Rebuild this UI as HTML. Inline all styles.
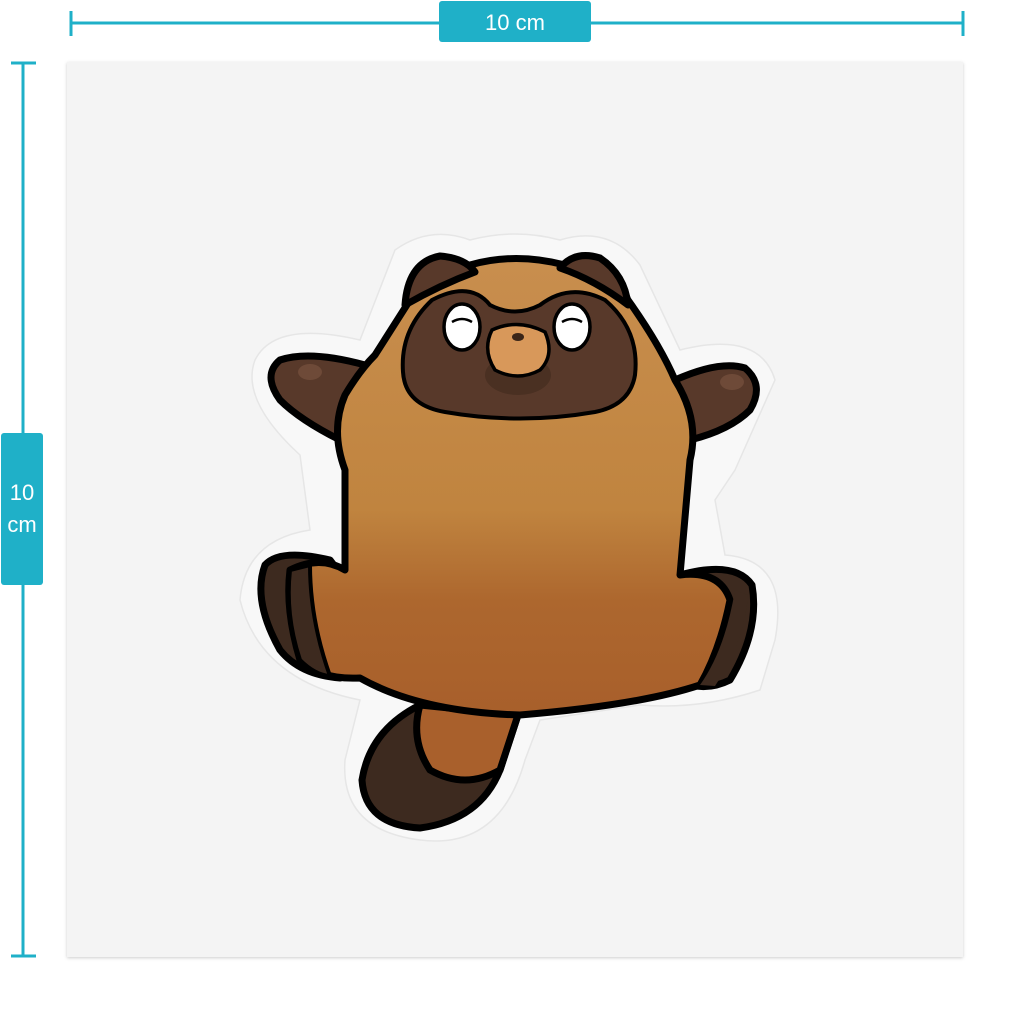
<!DOCTYPE html>
<html><head><style>
body{margin:0;width:1024px;height:1024px;background:#fff;overflow:hidden;font-family:"Liberation Sans",sans-serif}
</style></head><body>
<svg width="1024" height="1024" viewBox="0 0 1024 1024" xmlns="http://www.w3.org/2000/svg">
<defs>
<linearGradient id="bg" x1="0" y1="0" x2="0" y2="1">
<stop offset="0" stop-color="#c88e4e"/><stop offset="0.55" stop-color="#c0843f"/><stop offset="0.75" stop-color="#ad672e"/><stop offset="1" stop-color="#a85f2b"/>
</linearGradient>
<filter id="sh"><feDropShadow dx="0" dy="1" stdDeviation="1.5" flood-color="#000" flood-opacity="0.2"/></filter>
</defs>
<g stroke="#1fb0c8" stroke-width="3" fill="none">
<line x1="71" y1="23" x2="963" y2="23"/><line x1="71" y1="11" x2="71" y2="36"/><line x1="963" y1="11" x2="963" y2="36"/>
<line x1="23" y1="63" x2="23" y2="956"/><line x1="11" y1="63" x2="36" y2="63"/><line x1="11" y1="956" x2="36" y2="956"/>
</g>
<rect x="439" y="1" width="152" height="41" rx="3" fill="#1fb0c8"/>
<text x="515" y="30" font-size="22" fill="#fff" text-anchor="middle" font-family="Liberation Sans">10 cm</text>
<rect x="1" y="433" width="42" height="152" rx="3" fill="#1fb0c8"/>
<text x="22" y="500" font-size="22" fill="#fff" text-anchor="middle">10</text>
<text x="22" y="532" font-size="22" fill="#fff" text-anchor="middle">cm</text>
<rect x="67" y="62" width="896" height="895" fill="#f4f4f4" filter="url(#sh)"/>
<g fill="#f8f8f8" stroke="#e6e6e6" stroke-width="1.5">
<path d="M395 250 Q430 225 470 240 Q515 228 560 240 Q610 225 640 265 L680 350 Q760 330 775 380 L735 470 L715 500 L725 555 Q790 560 775 640 L760 690 Q700 710 640 705 L540 720 L525 760 Q500 850 420 840 Q340 830 345 760 L360 700 Q260 680 240 600 Q245 540 310 530 L300 455 Q240 400 255 360 Q275 320 360 340 Z"/>
</g>
<g stroke="#000" stroke-width="7" stroke-linejoin="round">
<path d="M420 705 Q370 730 362 780 Q365 825 420 828 Q480 820 500 770 L518 715 Z" fill="#3d2a1f"/>
<path d="M420 705 Q410 740 430 770 Q465 790 500 770 L518 715 Z" fill="#a9602c"/>
</g>
<g stroke="#000" stroke-width="7" stroke-linejoin="round">
<path d="M340 440 Q300 420 280 400 Q262 375 280 360 Q310 350 365 365 L345 440 Z" fill="#58392a"/>
<path d="M690 440 Q730 430 750 410 Q765 385 745 368 Q720 360 675 380 L690 445 Z" fill="#58392a"/>
<path d="M330 560 Q280 548 265 565 Q252 600 280 650 Q300 675 340 678 L360 600 Z" fill="#3d2a1f"/>
<path d="M680 575 Q735 560 752 585 Q760 630 730 680 Q710 690 690 685 L670 600 Z" fill="#3d2a1f"/>
</g>
<path d="M410 300 Q430 262 470 265 Q515 252 565 265 Q610 262 628 300 Q660 345 675 380 Q700 420 690 460 L680 575 Q720 570 730 600 Q720 650 700 685 Q640 705 520 715 Q420 712 360 678 Q320 680 300 660 Q285 610 290 570 Q320 555 345 570 L345 470 Q330 430 345 395 Q360 370 375 355 Z" fill="url(#bg)" stroke="#000" stroke-width="7" stroke-linejoin="round"/>
<path d="M290 570 Q285 615 300 660 Q315 675 330 676 Q310 620 310 565 Z" fill="#3d2a1f" stroke="#000" stroke-width="4"/>
<path d="M735 590 Q725 650 700 685 L715 686 Q745 640 748 595 Z" fill="#3d2a1f"/>
<g stroke="#000" stroke-width="7" stroke-linejoin="round">
<path d="M405 305 Q408 262 440 256 Q465 258 475 272 Q440 285 405 305 Z" fill="#58392a"/>
<path d="M560 268 Q575 250 600 258 Q625 275 628 305 Q595 280 560 268 Z" fill="#58392a"/>
</g>
<path d="M403 372 Q400 330 432 300 Q470 280 490 305 Q515 318 540 305 Q570 282 605 300 Q640 330 635 375 Q630 405 595 412 Q520 425 445 412 Q405 405 403 372 Z" fill="#58392a" stroke="#000" stroke-width="4"/>
<g stroke="#000" stroke-width="3.5" fill="#fff">
<ellipse cx="462" cy="327" rx="18" ry="23"/>
<ellipse cx="572" cy="327" rx="18" ry="23"/>
</g>
<g stroke="#000" stroke-width="2.5" fill="none">
<path d="M452 322 Q462 316 472 322"/><path d="M562 322 Q572 316 582 322"/>
</g>
<ellipse cx="518" cy="375" rx="33" ry="20" fill="#4a3022"/>
<path d="M492 330 Q518 318 545 332 Q555 355 540 370 Q518 382 495 370 Q482 350 492 330 Z" fill="#d8985a" stroke="#000" stroke-width="3.5"/>
<ellipse cx="518" cy="337" rx="6" ry="4" fill="#3a2518"/>
<ellipse cx="310" cy="372" rx="12" ry="8" fill="#6e4a38"/>
<ellipse cx="732" cy="382" rx="12" ry="8" fill="#6e4a38"/>
</svg>
</body></html>
